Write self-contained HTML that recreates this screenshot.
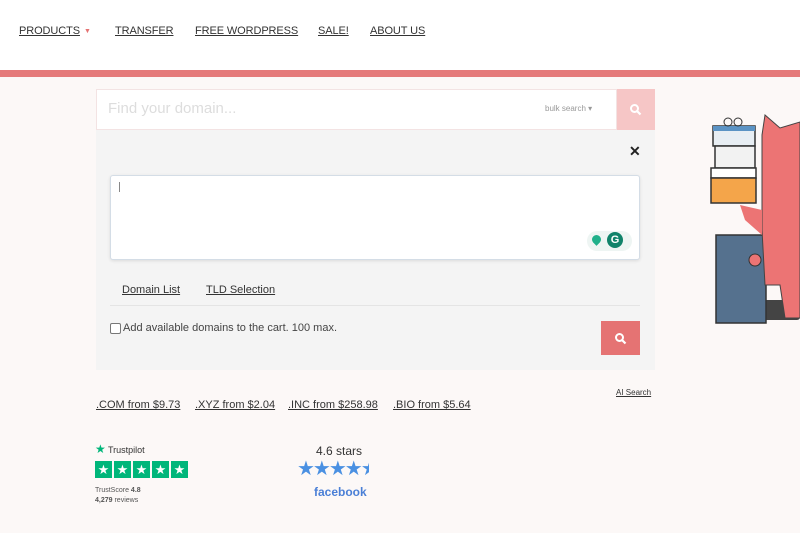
<!DOCTYPE html>
<html><head><style>
body{margin:0;width:800px;height:533px;overflow:hidden;background:#fcf8f7;font-family:"Liberation Sans",sans-serif;position:relative}
.hdr{position:absolute;left:0;top:0;width:800px;height:70px;background:#fff}
.band{position:absolute;left:0;top:70px;width:800px;height:7px;background:#e57a7a}
.nav{position:absolute;top:25px;font-size:11px;color:#333;text-decoration:underline;letter-spacing:-0.1px}
.a{position:absolute}
</style></head><body>
<div class="hdr"></div>
<div class="band"></div>
<span class="nav" style="left:19px">PRODUCTS</span><span class="a" style="left:84px;top:28px;color:#e57373;font-size:7px">▼</span>
<span class="nav" style="left:115px">TRANSFER</span>
<span class="nav" style="left:195px">FREE WORDPRESS</span>
<span class="nav" style="left:318px">SALE!</span>
<span class="nav" style="left:370px">ABOUT US</span>

<div class="a" style="left:96px;top:89px;width:521px;height:41px;background:#fff;border:1px solid #f3e3e3;box-sizing:border-box"></div>
<span class="a" style="left:108px;top:100px;font-size:15px;color:#ddd">Find your domain...</span>
<span class="a" style="left:545px;top:104px;font-size:8px;color:#999">bulk search ▾</span>
<div class="a" style="left:617px;top:89px;width:38px;height:41px;background:#f6c6c6"></div>
<svg class="a" style="left:629px;top:103px" width="13" height="13" viewBox="0 0 13 13"><circle cx="5.5" cy="5.5" r="3.5" fill="none" stroke="#fff" stroke-width="2"/><path d="M8 8l3.5 3.5" stroke="#fff" stroke-width="2.2"/></svg>

<div class="a" style="left:96px;top:130px;width:559px;height:240px;background:#f4f4f4"></div>
<span class="a" style="left:629px;top:143px;font-size:14px;font-weight:bold;color:#222">✕</span>
<div class="a" style="left:110px;top:175px;width:530px;height:85px;background:#fff;border:1px solid #d4dde6;border-radius:3px;box-shadow:0 1px 3px rgba(0,0,0,.1);box-sizing:border-box"></div>
<div class="a" style="left:119px;top:182px;width:1px;height:10px;background:#888"></div>
<div class="a" style="left:587px;top:231px;width:45px;height:20px;background:#eef5f3;border-radius:10px"></div>
<div class="a" style="left:592px;top:235px;width:9px;height:9px;background:#20b08a;border-radius:50% 50% 50% 0;transform:rotate(-45deg)"></div>
<div class="a" style="left:607px;top:232px;width:16px;height:16px;background:#11836a;border-radius:50%;color:#fff;font-size:11px;font-weight:bold;text-align:center;line-height:16px">G</div>
<span class="a" style="left:122px;top:284px;font-size:11px;color:#333;text-decoration:underline">Domain List</span>
<span class="a" style="left:206px;top:284px;font-size:11px;color:#333;text-decoration:underline">TLD Selection</span>
<div class="a" style="left:110px;top:305px;width:530px;height:1px;background:#e4e4e4"></div>
<div class="a" style="left:110px;top:323px;width:9px;height:9px;border:1px solid #777;background:#fff;border-radius:2px"></div>
<span class="a" style="left:123px;top:322px;font-size:11px;color:#444">Add available domains to the cart. 100 max.</span>
<div class="a" style="left:601px;top:321px;width:39px;height:34px;background:#e57373"></div>
<svg class="a" style="left:614px;top:332px" width="13" height="13" viewBox="0 0 13 13"><circle cx="5.5" cy="5.5" r="3.5" fill="none" stroke="#fff" stroke-width="2"/><path d="M8 8l3.5 3.5" stroke="#fff" stroke-width="2.2"/></svg>

<span class="a" style="left:616px;top:388px;font-size:8px;color:#333;text-decoration:underline">AI Search</span>
<span class="a" style="left:96px;top:399px;font-size:11px;color:#333;text-decoration:underline">.COM from $9.73</span>
<span class="a" style="left:195px;top:399px;font-size:11px;color:#333;text-decoration:underline">.XYZ from $2.04</span>
<span class="a" style="left:288px;top:399px;font-size:11px;color:#333;text-decoration:underline">.INC from $258.98</span>
<span class="a" style="left:393px;top:399px;font-size:11px;color:#333;text-decoration:underline">.BIO from $5.64</span>

<span class="a" style="left:95px;top:442px;font-size:12px;color:#00b67a">★</span>
<span class="a" style="left:108px;top:445px;font-size:9px;color:#333">Trustpilot</span>
<div class="a" style="left:95px;top:461px;display:flex;gap:2px">
<div style="width:17px;height:17px;background:#00b67a;color:#fff;font-size:13px;text-align:center;line-height:17px">★</div><div style="width:17px;height:17px;background:#00b67a;color:#fff;font-size:13px;text-align:center;line-height:17px">★</div><div style="width:17px;height:17px;background:#00b67a;color:#fff;font-size:13px;text-align:center;line-height:17px">★</div><div style="width:17px;height:17px;background:#00b67a;color:#fff;font-size:13px;text-align:center;line-height:17px">★</div><div style="width:17px;height:17px;background:#00b67a;color:#fff;font-size:13px;text-align:center;line-height:17px">★</div></div>
<span class="a" style="left:95px;top:487px;font-size:7px;color:#555">TrustScore <b>4.8</b></span>
<span class="a" style="left:95px;top:497px;font-size:7px;color:#555"><b>4,279</b> reviews</span>

<span class="a" style="left:316px;top:444px;font-size:12px;color:#333">4.6 stars</span>
<span class="a" style="left:297px;top:456px;font-size:20px;color:#4a90e2;letter-spacing:-2px">★★★★<span style="display:inline-block;width:8px;overflow:hidden;vertical-align:top">★</span></span>
<span class="a" style="left:314px;top:485px;font-size:12px;font-weight:bold;color:#4a7fd6">facebook</span>

<svg class="a" style="left:700px;top:110px" width="100" height="215" viewBox="0 0 100 215">
<rect x="55" y="190" width="45" height="20" fill="#444" rx="3"/>
<rect x="16" y="125" width="50" height="88" fill="#55718e" stroke="#333" stroke-width="1.5"/>
<rect x="13" y="16" width="42" height="20" fill="#e8eef3" stroke="#333" stroke-width="1.5"/>
<rect x="13" y="16" width="42" height="5" fill="#5b93c4"/>
<circle cx="28" cy="12" r="4" fill="none" stroke="#333"/><circle cx="38" cy="12" r="4" fill="none" stroke="#333"/>
<rect x="15" y="36" width="40" height="22" fill="#f2f2f2" stroke="#333" stroke-width="1.5"/>
<rect x="11" y="58" width="45" height="10" fill="#fff" stroke="#333" stroke-width="1.5"/>
<rect x="11" y="68" width="45" height="25" fill="#f4a54a" stroke="#333" stroke-width="1.5"/>
<path d="M62 25 L65 5 L80 18 L100 12 L100 208 L85 208 L80 175 L65 175 L62 120 Z" fill="#ec7474" stroke="#444" stroke-width="1"/>
<path d="M40 95 L62 100 L62 125 L45 110 Z" fill="#ec7474"/>
<circle cx="55" cy="150" r="6" fill="#ec7474" stroke="#333"/>
</svg>
</body></html>
